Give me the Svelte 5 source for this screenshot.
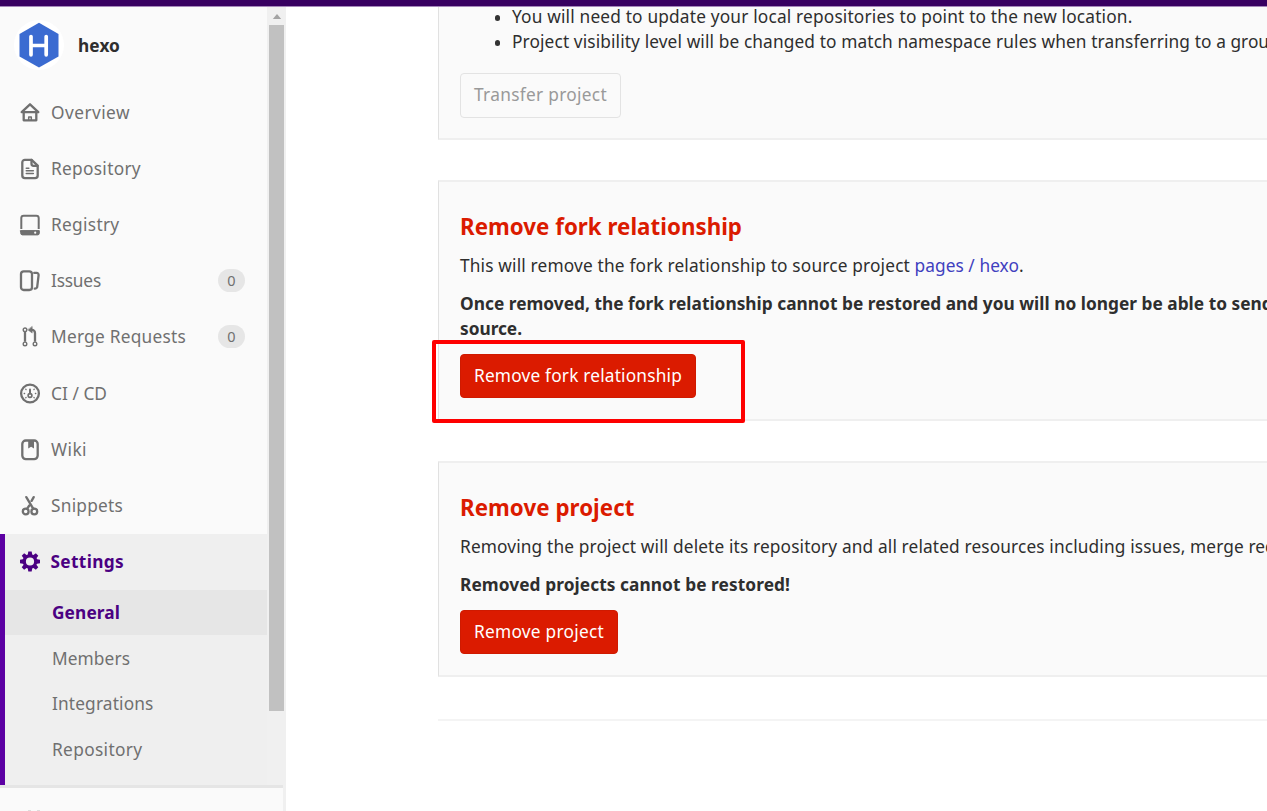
<script>
  const nav = [
    { icon: 'home', label: 'Overview', w: 79 },
    { icon: 'doc', label: 'Repository', w: 90 },
    { icon: 'disk', label: 'Registry', w: 68.5 },
    { icon: 'issues', label: 'Issues', w: 50, count: 0 },
    { icon: 'merge', label: 'Merge Requests', w: 135, count: 0 },
    { icon: 'gauge', label: 'CI / CD', w: 56 },
    { icon: 'book', label: 'Wiki', w: 36 },
    { icon: 'snip', label: 'Snippets', w: 72 }
  ];
  const sub = [
    { label: 'General', w: 68, active: true },
    { label: 'Members', w: 78 },
    { label: 'Integrations', w: 101.5 },
    { label: 'Repository', w: 90.5 }
  ];

  // Tracks the text so that it takes the given width.
  function fit(node, width) {
    const range = document.createRange();
    range.selectNodeContents(node);
    const apply = () => {
      node.style.letterSpacing = '0px';
      const natural = range.getBoundingClientRect().width;
      node.style.letterSpacing = (width - natural) / node.textContent.length + 'px';
    };
    apply();
    document.fonts.ready.then(apply);
  }
</script>

{#snippet glyph(name)}
  <svg class="icon" viewBox="0 0 20 20" fill="none" stroke="currentColor" stroke-width="2.3" stroke-linecap="round" stroke-linejoin="round">
    {#if name === 'home'}
      <path d="M1.7 9.7 10 1.8l8.3 7.9zM3.7 10v7.8h12.6V10" />
      <path d="M8.7 17.5v-3h2.6v3" stroke-width="1.5" />
    {:else if name === 'doc'}
      <path d="M5 1.3h6.6l6.1 5.8V17a2.6 2.6 0 0 1-2.6 2.6H4.9A2.6 2.6 0 0 1 2.3 17V3.9A2.6 2.6 0 0 1 5 1.3z" />
      <path d="M11.5 1.5v3.8a2 2 0 0 0 2 2h4" />
      <path d="M6.3 9.7h2.5M6.3 12.2h7M6.3 15h7" stroke-width="1.6" />
    {:else if name === 'disk'}
      <path d="M1.3 14.6V3.6A2.4 2.4 0 0 1 3.7 1.2h12.6a2.4 2.4 0 0 1 2.4 2.4v11" stroke-width="2" stroke-linecap="butt" />
      <path d="M.7 16.1h18.6v2.6a1.7 1.7 0 0 1-1.7 1.7H2.4A1.7 1.7 0 0 1 .7 18.7z" fill="currentColor" stroke-width="1" />
      <circle cx="15.2" cy="18.2" r="1.1" fill="#fafafa" stroke="none" />
    {:else if name === 'issues'}
      <rect x="1" y="0.9" width="11" height="18.6" rx="2.7" />
      <path d="M14.2 2.4h2.3a2 2 0 0 1 2.1 2.2l-1.3 11.1a2.5 2.5 0 0 1-2.6 2.5" />
    {:else if name === 'merge'}
      <circle cx="5" cy="3.3" r="1.8" stroke-width="1.4" />
      <circle cx="5" cy="17.4" r="1.8" stroke-width="1.4" />
      <circle cx="15" cy="17.4" r="1.8" stroke-width="1.4" />
      <path d="M5 5.3v10M15 15.3V6.4a3 3 0 0 0-3-3h-1" stroke-linecap="butt" />
      <path d="M12.2 0.2v6.4L8 3.4z" fill="currentColor" stroke-width=".5" />
    {:else if name === 'gauge'}
      <circle cx="10" cy="10" r="8.9" />
      <circle cx="10" cy="12" r="1.9" stroke-width="1.6" />
      <path d="M10 5.9v4" stroke-width="2" />
      <path d="M4.2 10h.4M15.4 10h.4M5.8 5.8l.3.3M14.2 5.8l-.3.3M5.8 14.2l.3-.3M14.2 14.2l-.3-.3" stroke-width="1.3" />
    {:else if name === 'book'}
      <rect x="2.3" y="1" width="15.4" height="18.6" rx="3.5" />
      <path d="M8.2 1.5h5.8v7.6l-2.9-1.9-2.9 1.9z" fill="currentColor" stroke="none" />
    {:else if name === 'snip'}
      <circle cx="5.7" cy="16" r="2.9" />
      <circle cx="14.3" cy="16" r="2.9" />
      <path d="M6.3 1.6 12 11.2l1.6 2.2M13.7 1.6l-2.1 3.8M9.3 10l-2.1 3.2" />
    {:else}
      {#each [0, 45, 90, 135, 180, 225, 270, 315] as turn}
        <path d="M8.3 0h3.4l.7 4.2H7.6z" fill="currentColor" stroke="none" transform="rotate({turn} 10 10)" />
      {/each}
      <circle cx="10" cy="10" r="5.7" stroke-width="3.2" />
    {/if}
  </svg>
{/snippet}

<div class="page">
  <header></header>
  <div class="body">
    <aside>
      <div class="upper">
        <div class="menu">
          <div class="project">
            <svg class="avatar" viewBox="0 0 50 50">
              <circle cx="25" cy="25" r="25" fill="#fff" />
              <path d="M25 2.8 44.5 14v22.4L25 47.6 5.5 36.4V14z" fill="#3b6bd1" />
              <path d="M17 16.5v18.3M32.2 16.5v18.3M17 25.5h15.2" stroke="#fff" stroke-width="3.7" stroke-linecap="round" />
            </svg>
            <b><span use:fit={42}>hexo</span></b>
          </div>
          {#each nav as item}
            <div class="row">
              {@render glyph(item.icon)}
              <span use:fit={item.w}>{item.label}</span>
              {#if item.count !== undefined}<i class="badge">{item.count}</i>{/if}
            </div>
          {/each}
          <div class="open">
            <div class="row current">
              {@render glyph('gear')}
              <span use:fit={73.5}>Settings</span>
            </div>
            {#each sub as item}
              <div class="sub" class:active={item.active}><span use:fit={item.w}>{item.label}</span></div>
            {/each}
          </div>
        </div>
        <div class="track">
          <svg viewBox="0 0 10 6"><path d="M0 6 5 0l5 6z" fill="#a3a3a3" /></svg>
          <div class="thumb"></div>
        </div>
      </div>
      <div class="collapse"><span></span><span></span></div>
    </aside>

    <main>
      <section class="transfer">
        <ul>
          <li><span use:fit={620.5}>You will need to update your local repositories to point to the new location.</span></li>
          <li><span use:fit={714}>Project visibility level will be changed to match namespace rules when transferring to a</span><span class="tail">&nbsp;grou</span></li>
        </ul>
        <button class="plain"><span use:fit={133}>Transfer project</span></button>
      </section>

      <section class="fork">
        <h4><span use:fit={282}>Remove fork relationship</span></h4>
        <p><span use:fit={450}>This will remove the fork relationship to source project</span><a href="#top"><span use:fit={104.5}>pages / hexo</span></a>.</p>
        <p class="strong"><span use:fit={767}>Once removed, the fork relationship cannot be restored and you will no longer be able to</span><span class="tail">&nbsp;send</span><br /><span use:fit={62}>source.</span></p>
        <button><span use:fit={208}>Remove fork relationship</span></button>
      </section>

      <section class="remove">
        <h4><span use:fit={174.5}>Remove project</span></h4>
        <p><span use:fit={784}>Removing the project will delete its repository and all related resources including issues, merge</span><span class="tail">&nbsp;req</span></p>
        <p class="strong"><span use:fit={330}>Removed projects cannot be restored!</span></p>
        <button><span use:fit={130}>Remove project</span></button>
      </section>
      <hr />
    </main>
  </div>
  <div class="marker"></div>
</div>

<style>
  :global(body) { margin: 0; background: #fff; }
  .page {
    position: relative; width: 1267px; height: 811px; overflow: hidden;
    display: flex; flex-direction: column;
    font: 17.3px/25px "Noto Sans", sans-serif; color: #2e2e2e;
  }
  .page * { box-sizing: border-box; }
  span { white-space: nowrap; }
  header { flex: none; height: 7px; background: #380061; border-bottom: 1px solid #a587ba; }
  .body { display: flex; flex: 1; min-height: 0; }

  aside { width: 286px; flex: none; display: flex; flex-direction: column; background: #fafafa; color: #707070; }
  .upper { display: flex; height: 778px; flex: none; }
  .menu { width: 267px; }
  .project { height: 77px; display: flex; align-items: center; padding: 0 0 1px 14px; }
  .avatar { width: 50px; height: 50px; margin-right: 14px; }
  .project b { color: #2e2e2e; }
  .row { height: 56.2px; display: flex; align-items: center; padding-left: 20px; }
  .icon { width: 20px; height: 21px; overflow: visible; flex: none; margin-right: 11px; }
  .badge { margin-left: auto; margin-right: 22px; width: 27px; height: 23px; border-radius: 12px; background: #e6e6e6; font: 14.5px/23px "Noto Sans", sans-serif; text-align: center; }
  .open { margin-top: .4px; height: 251px; background: #efefef; border-left: 5px solid #5c00a3; }
  .open .row { padding-left: 14.5px; height: 56px; }
  .current { color: #4b0082; font-weight: 700; }
  .sub { height: 45.6px; display: flex; align-items: center; padding-left: 47px; }
  .active { color: #4b0082; font-weight: 700; background: #e6e6e6; padding-bottom: 1px; }
  .track { width: 19px; flex: none; background: #f0f0f0; padding: 7px 2px 0; }
  .track svg { display: block; width: 10px; height: 5px; margin: 0 auto 6px; }
  .thumb { width: 15px; height: 686px; background: #c1c1c1; }
  .collapse { flex: 1; width: 283px; border-top: 3px solid #e5e5e5; box-shadow: 3px 0 #f0f0f0; display: flex; align-items: flex-end; gap: 6px; padding-left: 28px; }
  .collapse span { width: 3px; height: 1px; background: #ddd; }

  main { flex: 1; min-width: 0; padding-left: 152px; overflow: hidden; }
  section { background: #fafafa; border: solid #efefef; border-width: 2px 0 2px 1px; border-left-color: #e1e1e1; padding-left: 21px; overflow: hidden; white-space: nowrap; }
  .transfer { height: 133px; border-top: 0; }
  .fork { height: 241px; margin-top: 40px; padding-top: 30px; }
  .remove { height: 216px; margin-top: 40px; padding-top: 30px; }
  ul { margin: -3px 0 19px; padding: 0 0 0 52px; list-style: none; }
  li { display: flex; align-items: center; height: 25px; }
  li::before { content: ""; flex: none; width: 5.5px; height: 5.5px; border-radius: 50%; background: #333; margin: 2.5px 12px 0 -17.5px; }
  h4 { margin: 0 0 11px; font-size: 22.3px; line-height: 30px; color: #db1b00; }
  p { margin: 0 0 13px; }
  a { color: #4040bf; text-decoration: none; margin-left: 4.5px; }
  .strong { font-weight: 700; margin-bottom: 12.5px; }
  .tail { letter-spacing: 0; }
  button {
    display: flex; align-items: center; height: 44px; margin: 0; padding: 0 13px;
    background: #db1b00; color: #fff; border: 1px solid #cf1a00; border-radius: 4px;
    font: inherit;
  }
  .plain { height: 45px; padding-bottom: 2px; background: #fafafa; color: #999; border-color: #e3e3e3; }
  hr { margin: 42px 0 0; border: 0; height: 2px; background: #f4f4f4; }
  .marker { position: absolute; left: 432px; top: 340px; width: 313px; height: 83px; border: 4px solid #fe0000; border-radius: 2px; }
</style>
